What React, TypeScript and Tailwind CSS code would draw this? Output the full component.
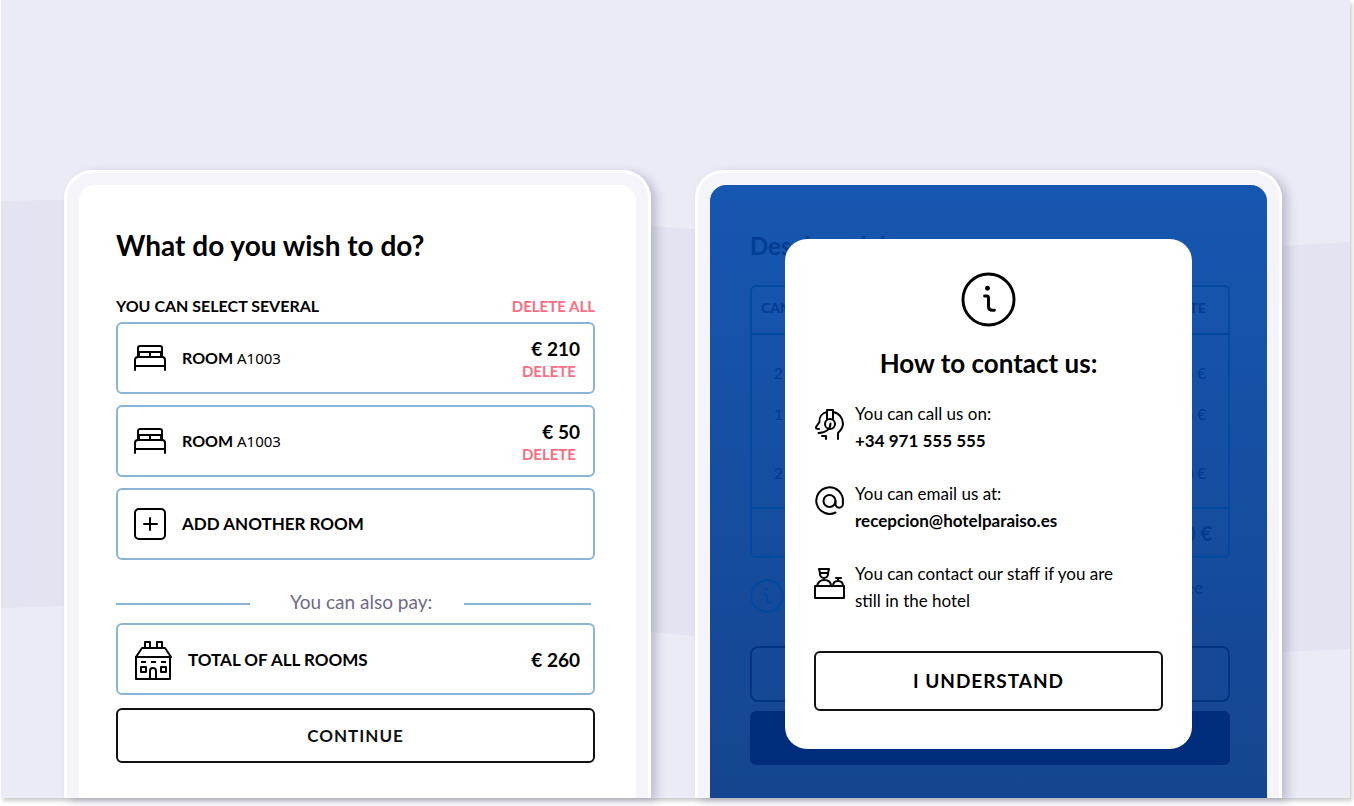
import { ReactNode } from 'react';

interface Line {
  qty: string;
  amount: string;
  cell: string;
}

const lines: Line[] = [
  { qty: '2', amount: '75 €', cell: 'h-[60px] align-bottom pb-2.5' },
  { qty: '1', amount: '15 €', cell: 'h-10 align-middle' },
  { qty: '2', amount: '20 €', cell: 'h-[74px] align-middle pt-1.5' },
];

function BedIcon() {
  return (
    <svg width="32" height="28" viewBox="0 0 32 28" fill="none" stroke="currentColor" strokeWidth="2" strokeLinecap="round" strokeLinejoin="round">
      <path d="M1 26V16q0-3 3-3h24q3 0 3 3v10M1 22h30" />
      <path d="M4 13V4q0-2 2-2h20q2 0 2 2v9" />
      <path d="M5 8h22M5 12V9q0-1 1-1h9q1 0 1 1v4M16 13V9q0-1 1-1h9q1 0 1 1v3" />
    </svg>
  );
}

function PlusIcon() {
  return (
    <svg width="32" height="32" viewBox="0 0 32 32" fill="none" stroke="currentColor" strokeWidth="2" strokeLinecap="round">
      <rect x="1" y="1" width="30" height="30" rx="4" />
      <path d="M10 16h13M16 10v12" />
    </svg>
  );
}

function HotelIcon() {
  return (
    <svg width="38" height="40" viewBox="0 0 38 40" fill="none" stroke="currentColor" strokeWidth="2" strokeLinejoin="round">
      <path d="M2 17v22h34V17M1 17h36L31 8H8L2 17" />
      <path d="M11 8V2h5v6M23 8V2h5v6" />
      <path d="M7 22h5M17 22h5M27 22h5" />
      <path d="M7 27h5v5H7zM27 27h5v5h-5z" />
      <path d="M16 39v-8q0-3 3-3t3 3v8z" />
    </svg>
  );
}

function InfoIcon({ className }: { className: string }) {
  return (
    <svg className={className} viewBox="0 0 56 56" fill="none" stroke="currentColor" strokeWidth="3" strokeLinecap="round" strokeLinejoin="round">
      <circle cx="28" cy="28" r="26" />
      <circle cx="27" cy="16.500" r="2.500" fill="currentColor" stroke="none" />
      <path d="M24 24.500H26q2 0 2 2V35q0 4 4 4h2" />
    </svg>
  );
}

function SupportIcon() {
  return (
    <svg width="32" height="32" viewBox="0 0 32 32" fill="none" stroke="currentColor" strokeWidth="2" strokeLinecap="round" strokeLinejoin="round">
      <path d="M13 4C8 5 5 9 5.500 14L2 19q-1 2 3 2" />
      <path d="M19 4c6 1 10 6 10 12 0 4-2 6-5 9v6" />
      <path d="M13 11V2h6v9" />
      <circle cx="16" cy="16" r="5" />
      <path d="M16.500 15.500c0 5-4 9-12 9.500M8 28h4v3" />
    </svg>
  );
}

function AtIcon() {
  return (
    <svg className="overflow-visible" width="32" height="32" viewBox="0 2 32 32" fill="none" stroke="currentColor" strokeWidth="2" strokeLinecap="round">
      <circle cx="15.500" cy="15" r="6" />
      <path d="M21.500 15v3a3.700 3.700 0 0 0 7.400 0v-3A13.300 13.300 0 1 0 21.500 26.500" />
    </svg>
  );
}

function ReceptionIcon() {
  return (
    <svg width="32" height="32" viewBox="0 0 32 32" fill="none" stroke="currentColor" strokeWidth="2" strokeLinecap="round" strokeLinejoin="round">
      <rect x="1" y="18" width="29" height="12" />
      <path d="M5 1h10l-1 4H6zM6 5v1a4 4 0 0 0 8 0V5" />
      <path d="M3 18c1-4 3-6 7-6s7 2 7 6M19 18c0-3 2-5 5-5s5 2 5 5M24 13v-3M22 10h5" />
    </svg>
  );
}

function Phone({ children, className }: { children: ReactNode; className: string }) {
  return (
    <section className="min-w-0 flex-1 flex flex-col rounded-t-[28px] border-x-3 border-t-3 border-white bg-[#f5f4fa] px-3 pt-3 shadow-[6px_3px_10px_rgba(70,65,110,0.26)]">
      <div className={`flex-1 rounded-t-2xl ${className}`}>{children}</div>
    </section>
  );
}

function RoomCard({ code, price }: { code: string; price: string }) {
  return (
    <li className="flex h-[72px] items-center rounded-md border-2 border-[#8bb5d5] pl-4 pr-[13px]">
      <BedIcon />
      <p className="ml-4 flex-1 text-base font-bold">
        ROOM <span className="font-['Noto_Sans',sans-serif] text-[15px] font-normal">{code}</span>
      </p>
      <div className="flex flex-col items-end pt-0.5">
        <span className="text-[19px] leading-6 font-bold">{price}</span>
        <button className="mr-1 text-[15px] leading-5 font-bold text-[#ff6b80]">DELETE</button>
      </div>
    </li>
  );
}

function ContactRow({ icon, children }: { icon: ReactNode; children: ReactNode }) {
  return (
    <li className="flex gap-[9px]">
      <span className="pt-2">{icon}</span>
      <div className="pr-8 text-[17px] leading-[27px]">{children}</div>
    </li>
  );
}

export default function App() {
  return (
    <div className="flex min-h-screen flex-col bg-white pb-2 pl-px pr-1 font-['Lato',sans-serif] text-black">
      <main className="relative flex flex-1 gap-11 bg-[#ebebf6] pl-[63px] pr-[68px] pt-[170px] shadow-[2px_3px_4px_rgba(0,0,0,0.2)]">
        <svg className="absolute inset-0 h-full w-full" viewBox="0 0 1349 798" preserveAspectRatio="none" aria-hidden="true">
          <path d="M0 201L63 200Q350 195 650 226L694 229Q1000 262 1281 246L1349 242V649L1281 652Q1000 668 694 636L650 632Q350 600 63 606L0 608Z" fill="#e3e3f1" />
        </svg>

        {/* Room selection */}
        <div className="relative flex min-w-0 flex-1">
          <Phone className="bg-white pb-[35px] pl-[37px] pr-[41px] pt-[42px]">
            <h1 className="text-[28px] leading-9 font-bold">What do you wish to do?</h1>
            <div className="mt-[33px] flex items-center justify-between leading-5 font-bold">
              <h2 className="text-base leading-5">YOU CAN SELECT SEVERAL</h2>
              <button className="text-[15px] text-[#ff6b80]">DELETE ALL</button>
            </div>
            <ul className="mt-[6px] space-y-[11px]">
              <RoomCard code="A1003" price="€ 210" />
              <RoomCard code="A1003" price="€ 50" />
              <li>
                <button className="flex h-[72px] w-full items-center gap-4 rounded-md border-2 border-[#8bb5d5] pl-4 text-[17px] font-bold">
                  <PlusIcon />
                  ADD ANOTHER ROOM
                </button>
              </li>
            </ul>
            <div className="mt-7 flex items-center pr-1">
              <span className="h-0.5 w-[134px] bg-[#8bb5d5]" />
              <span className="pb-1 pl-10 pr-8 text-[19px] leading-7 text-[#6e6a8a]">You can also pay:</span>
              <span className="h-0.5 flex-1 bg-[#8bb5d5]" />
            </div>
            <div className="mt-[3px] flex h-[72px] items-center gap-4 rounded-md border-2 border-[#8bb5d5] pl-4 pr-[13px] pt-0.5">
              <HotelIcon />
              <p className="flex-1 text-[17px] font-bold">TOTAL OF ALL ROOMS</p>
              <span className="text-[19px] font-bold">€ 260</span>
            </div>
            <button className="mt-[13px] h-[55px] w-full rounded-md border-2 border-[#111] text-[17px] font-bold tracking-[1px] text-[#111]">
              CONTINUE
            </button>
          </Phone>
        </div>

        {/* Cost breakdown, covered by the contact dialog */}
        <div className="relative flex min-w-0 flex-1">
          <Phone className="relative bg-linear-to-b from-[#1657b1] to-[#154590] pb-[33px] pl-10 pr-[37px] pt-[43px] text-[#003c92]">
            <h2 className="text-2xl leading-9 font-bold">Desglose del</h2>
            <div className="mt-[21px] rounded-md border-2 border-[#004a9f]">
              <table className="w-full text-[15px]">
                <thead>
                  <tr className="h-[47px] border-b-2 border-[#004a9f] text-sm">
                    <th className="pb-1 pl-[9px] text-left">CANT.</th>
                    <th className="pb-1 pr-[22px] text-right">IMPORTE</th>
                  </tr>
                </thead>
                <tbody>
                  {lines.map((line) => (
                    <tr key={line.amount}>
                      <td className={`pl-[22px] ${line.cell}`}>{line.qty}</td>
                      <td className={`pr-[22px] text-right ${line.cell}`}>{line.amount}</td>
                    </tr>
                  ))}
                </tbody>
                <tfoot>
                  <tr className="h-12 border-t-2 border-[#004a9f] text-xl font-bold">
                    <td />
                    <td className="pr-4 text-right">110 €</td>
                  </tr>
                </tfoot>
              </table>
            </div>
            <div className="mt-[21px] flex items-center">
              <InfoIcon className="h-[34px] w-[34px] text-[#004a9f]" />
              <p className="flex-1 pb-4 pr-[27px] text-right text-[17px] leading-[18px]">lo desee</p>
            </div>
            <button className="mt-[33px] block h-14 w-full rounded-lg border-2 border-[#003583]" aria-label="Contacto" />
            <button className="mt-[9px] block h-[54px] w-full rounded-md bg-[#002d7b]" aria-label="Pagar" />

            <div className="absolute inset-x-4 top-[54px] flex justify-center">
              <div role="dialog" aria-labelledby="contact-title" className="flex w-full max-w-[407px] flex-col rounded-[22px] bg-white px-[29px] pb-[38px] pt-[33px] text-black">
                <InfoIcon className="h-[55px] w-[55px] self-center" />
                <h2 id="contact-title" className="mt-5 text-center text-[26px] leading-8 font-bold">
                  How to contact us:
                </h2>
                <ul className="mt-[21px] space-y-[26px]">
                  <ContactRow icon={<SupportIcon />}>
                    <p>You can call us on:</p>
                    <p className="font-bold">+34 971 555 555</p>
                  </ContactRow>
                  <ContactRow icon={<AtIcon />}>
                    <p>You can email us at:</p>
                    <p className="font-bold">recepcion@hotelparaiso.es</p>
                  </ContactRow>
                  <ContactRow icon={<ReceptionIcon />}>
                    <p>You can contact our staff if you are still in the hotel</p>
                  </ContactRow>
                </ul>
                <button className="mt-[37px] h-[60px] rounded-md border-2 border-[#111] text-[19px] font-bold tracking-wider">I UNDERSTAND</button>
              </div>
            </div>
          </Phone>
        </div>
      </main>
    </div>
  );
}
